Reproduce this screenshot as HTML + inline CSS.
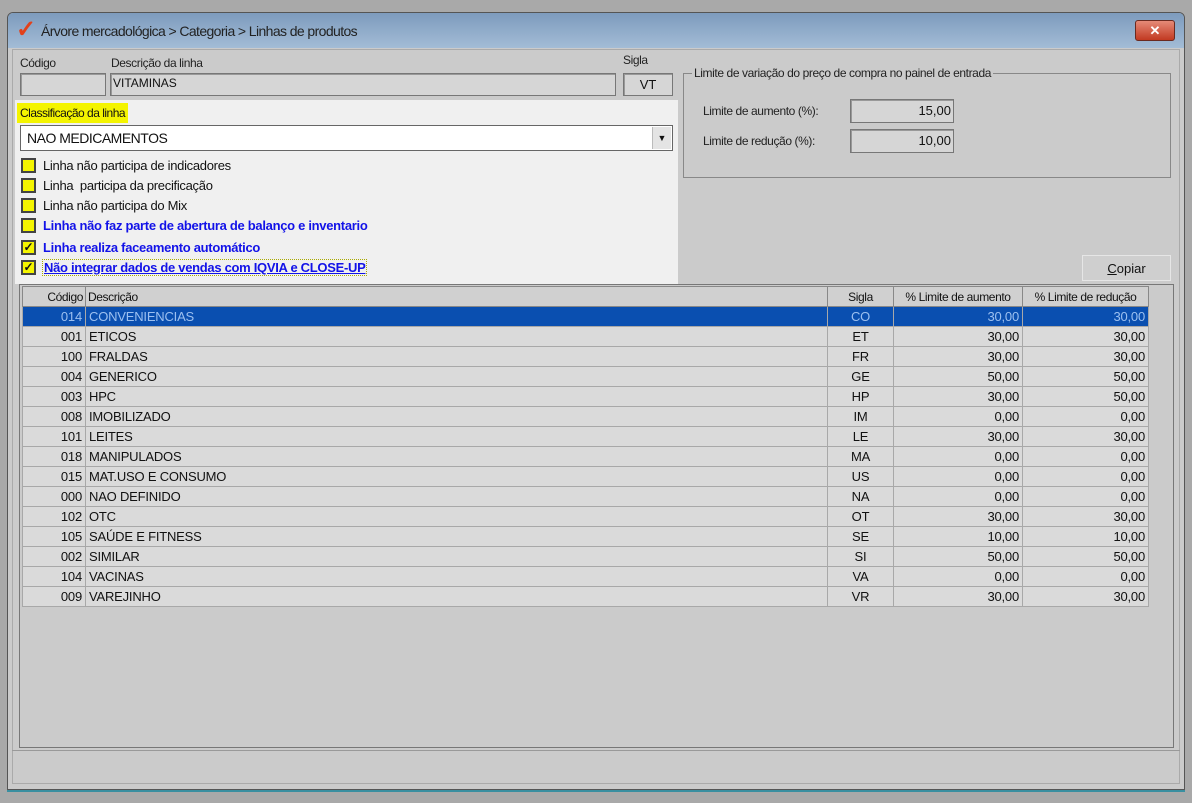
<!DOCTYPE html>
<html><head><meta charset="utf-8"><style>
*{box-sizing:border-box;margin:0;padding:0}
body{width:1192px;height:803px;background:#a9a9a9;font-family:"Liberation Sans",sans-serif;font-size:12px;color:#111;position:relative;overflow:hidden}
.abs{position:absolute;white-space:nowrap}
.win{left:7px;top:12px;width:1178px;height:778px;background:#cbcbcb;border:1px solid #555;border-radius:6px 6px 0 0;box-shadow:0 2px 0 #3a8fa0}
.title{left:8px;top:13px;width:1176px;height:35px;background:linear-gradient(#7d9bbd,#a3bcd6);border-radius:5px 5px 0 0}
.lbl{font-size:12px;color:#222;letter-spacing:-0.4px}
.inp{background:#d6d6d6;border:1px solid #777;box-shadow:inset 1px 1px 0 #999}
.cb{width:15px;height:15px;background:#f4f400;border:2px solid #444;}
.cbl{font-size:13px;letter-spacing:-0.3px}
.blue{color:#1212e8;font-weight:bold}
table{border-collapse:collapse;position:absolute;left:22px;top:286px;font-size:13px;letter-spacing:-0.2px}
td{height:20px;border:1px solid #a8a8a8;background:#dadada;padding:0 3px;white-space:nowrap}
th{height:20px;font-weight:normal;font-size:12px;border:1px solid #888;background:#d0d0d0;padding:0 2px;letter-spacing:-0.4px;white-space:nowrap}
tr.sel td{background:#0a4fb0;color:#9cc0f0}
.r{text-align:right}.c{text-align:center}
</style></head><body>
<div class="abs win"></div>
<div class="abs title"></div>
<div class="abs" style="left:16px;top:17px;font-size:24px;color:#e2411b;font-weight:bold;line-height:26px">✓</div>
<div class="abs" style="left:41px;top:23px;font-size:14px;color:#222;letter-spacing:-0.6px">Árvore mercadológica &gt; Categoria &gt; Linhas de produtos</div>
<div class="abs" style="left:1135px;top:20px;width:40px;height:21px;background:linear-gradient(#e58a78,#c23a22);border:1px solid #6a2a20;border-radius:3px;color:#fff;font-weight:bold;text-align:center;line-height:19px;font-size:13px">✕</div>
<div class="abs" style="left:12px;top:49px;width:1168px;height:735px;border:1px solid #aaa"></div>

<div class="abs lbl" style="left:20px;top:56px">Código</div>
<div class="abs lbl" style="left:111px;top:56px">Descrição da linha</div>
<div class="abs lbl" style="left:623px;top:53px">Sigla</div>
<div class="abs inp" style="left:20px;top:73px;width:86px;height:23px"></div>
<div class="abs inp" style="left:110px;top:73px;width:506px;height:23px;padding:2px 2px;font-size:12px">VITAMINAS</div>
<div class="abs inp" style="left:623px;top:73px;width:50px;height:23px;text-align:center;font-size:13px;padding-top:3px">VT</div>

<div class="abs" style="left:15px;top:100px;width:663px;height:184px;background:#f0f0f0"></div>
<div class="abs" style="left:17px;top:103px;height:20px;background:#f4f400;font-size:12px;padding:3px 3px;letter-spacing:-0.5px">Classificação da linha</div>
<div class="abs" style="left:20px;top:125px;width:653px;height:26px;background:#fff;border:1px solid #666;font-size:14px;padding:4px 6px;letter-spacing:-0.5px">NAO MEDICAMENTOS</div>
<div class="abs" style="left:652px;top:127px;width:19px;height:22px;background:#e4e4e4;border-left:1px solid #bbb;text-align:center;font-size:9px;line-height:22px">▼</div>

<div class="abs cb" style="left:21px;top:158px"></div><div class="abs cbl" style="left:43px;top:158px">Linha não participa de indicadores</div>
<div class="abs cb" style="left:21px;top:178px"></div><div class="abs cbl" style="left:43px;top:178px">Linha &nbsp;participa da precificação</div>
<div class="abs cb" style="left:21px;top:198px"></div><div class="abs cbl" style="left:43px;top:198px">Linha não participa do Mix</div>
<div class="abs cb" style="left:21px;top:218px"></div><div class="abs cbl blue" style="left:43px;top:218px">Linha não faz parte de abertura de balanço e inventario</div>
<div class="abs cb" style="left:21px;top:240px;font-size:12px;line-height:11px;text-align:center;font-weight:bold">✓</div><div class="abs cbl blue" style="left:43px;top:240px">Linha realiza faceamento automático</div>
<div class="abs cb" style="left:21px;top:260px;font-size:12px;line-height:11px;text-align:center;font-weight:bold">✓</div><div class="abs cbl blue" style="left:42px;top:259px;border:1px dotted #aa0;padding:0 1px;text-decoration:underline">Não integrar dados de vendas com IQVIA e CLOSE-UP</div>

<div class="abs" style="left:683px;top:73px;width:488px;height:105px;border:1px solid #888"></div>
<div class="abs lbl" style="left:692px;top:66px;background:#cbcbcb;padding:0 2px">Limite de variação do preço de compra no painel de entrada</div>
<div class="abs lbl" style="left:703px;top:104px">Limite de aumento (%):</div>
<div class="abs lbl" style="left:703px;top:134px">Limite de redução (%):</div>
<div class="abs inp" style="left:850px;top:99px;width:104px;height:24px;text-align:right;padding:3px 2px;font-size:13px">15,00</div>
<div class="abs inp" style="left:850px;top:129px;width:104px;height:24px;text-align:right;padding:3px 2px;font-size:13px">10,00</div>

<div class="abs" style="left:1082px;top:255px;width:89px;height:26px;background:#cfcfcf;border:1px solid #e6e6e6;text-align:center;padding-top:5px;font-size:13px"><u>C</u>opiar</div>

<div class="abs" style="left:19px;top:284px;width:1155px;height:464px;border:1px solid #777;background:#cbcbcb"></div>
<div class="abs" style="left:12px;top:750px;width:1168px;height:1px;background:#999"></div>
<table>
<tr><th style="width:63px;text-align:right">Código</th><th style="width:742px;text-align:left">Descrição</th><th style="width:66px">Sigla</th><th style="width:129px">% Limite de aumento</th><th style="width:126px">% Limite de redução</th></tr>
<tr class="sel"><td class="r">014</td><td>CONVENIENCIAS</td><td class="c">CO</td><td class="r">30,00</td><td class="r">30,00</td></tr>
<tr><td class="r">001</td><td>ETICOS</td><td class="c">ET</td><td class="r">30,00</td><td class="r">30,00</td></tr>
<tr><td class="r">100</td><td>FRALDAS</td><td class="c">FR</td><td class="r">30,00</td><td class="r">30,00</td></tr>
<tr><td class="r">004</td><td>GENERICO</td><td class="c">GE</td><td class="r">50,00</td><td class="r">50,00</td></tr>
<tr><td class="r">003</td><td>HPC</td><td class="c">HP</td><td class="r">30,00</td><td class="r">50,00</td></tr>
<tr><td class="r">008</td><td>IMOBILIZADO</td><td class="c">IM</td><td class="r">0,00</td><td class="r">0,00</td></tr>
<tr><td class="r">101</td><td>LEITES</td><td class="c">LE</td><td class="r">30,00</td><td class="r">30,00</td></tr>
<tr><td class="r">018</td><td>MANIPULADOS</td><td class="c">MA</td><td class="r">0,00</td><td class="r">0,00</td></tr>
<tr><td class="r">015</td><td>MAT.USO E CONSUMO</td><td class="c">US</td><td class="r">0,00</td><td class="r">0,00</td></tr>
<tr><td class="r">000</td><td>NAO DEFINIDO</td><td class="c">NA</td><td class="r">0,00</td><td class="r">0,00</td></tr>
<tr><td class="r">102</td><td>OTC</td><td class="c">OT</td><td class="r">30,00</td><td class="r">30,00</td></tr>
<tr><td class="r">105</td><td>SAÚDE E FITNESS</td><td class="c">SE</td><td class="r">10,00</td><td class="r">10,00</td></tr>
<tr><td class="r">002</td><td>SIMILAR</td><td class="c">SI</td><td class="r">50,00</td><td class="r">50,00</td></tr>
<tr><td class="r">104</td><td>VACINAS</td><td class="c">VA</td><td class="r">0,00</td><td class="r">0,00</td></tr>
<tr><td class="r">009</td><td>VAREJINHO</td><td class="c">VR</td><td class="r">30,00</td><td class="r">30,00</td></tr>
</table>
</body></html>
